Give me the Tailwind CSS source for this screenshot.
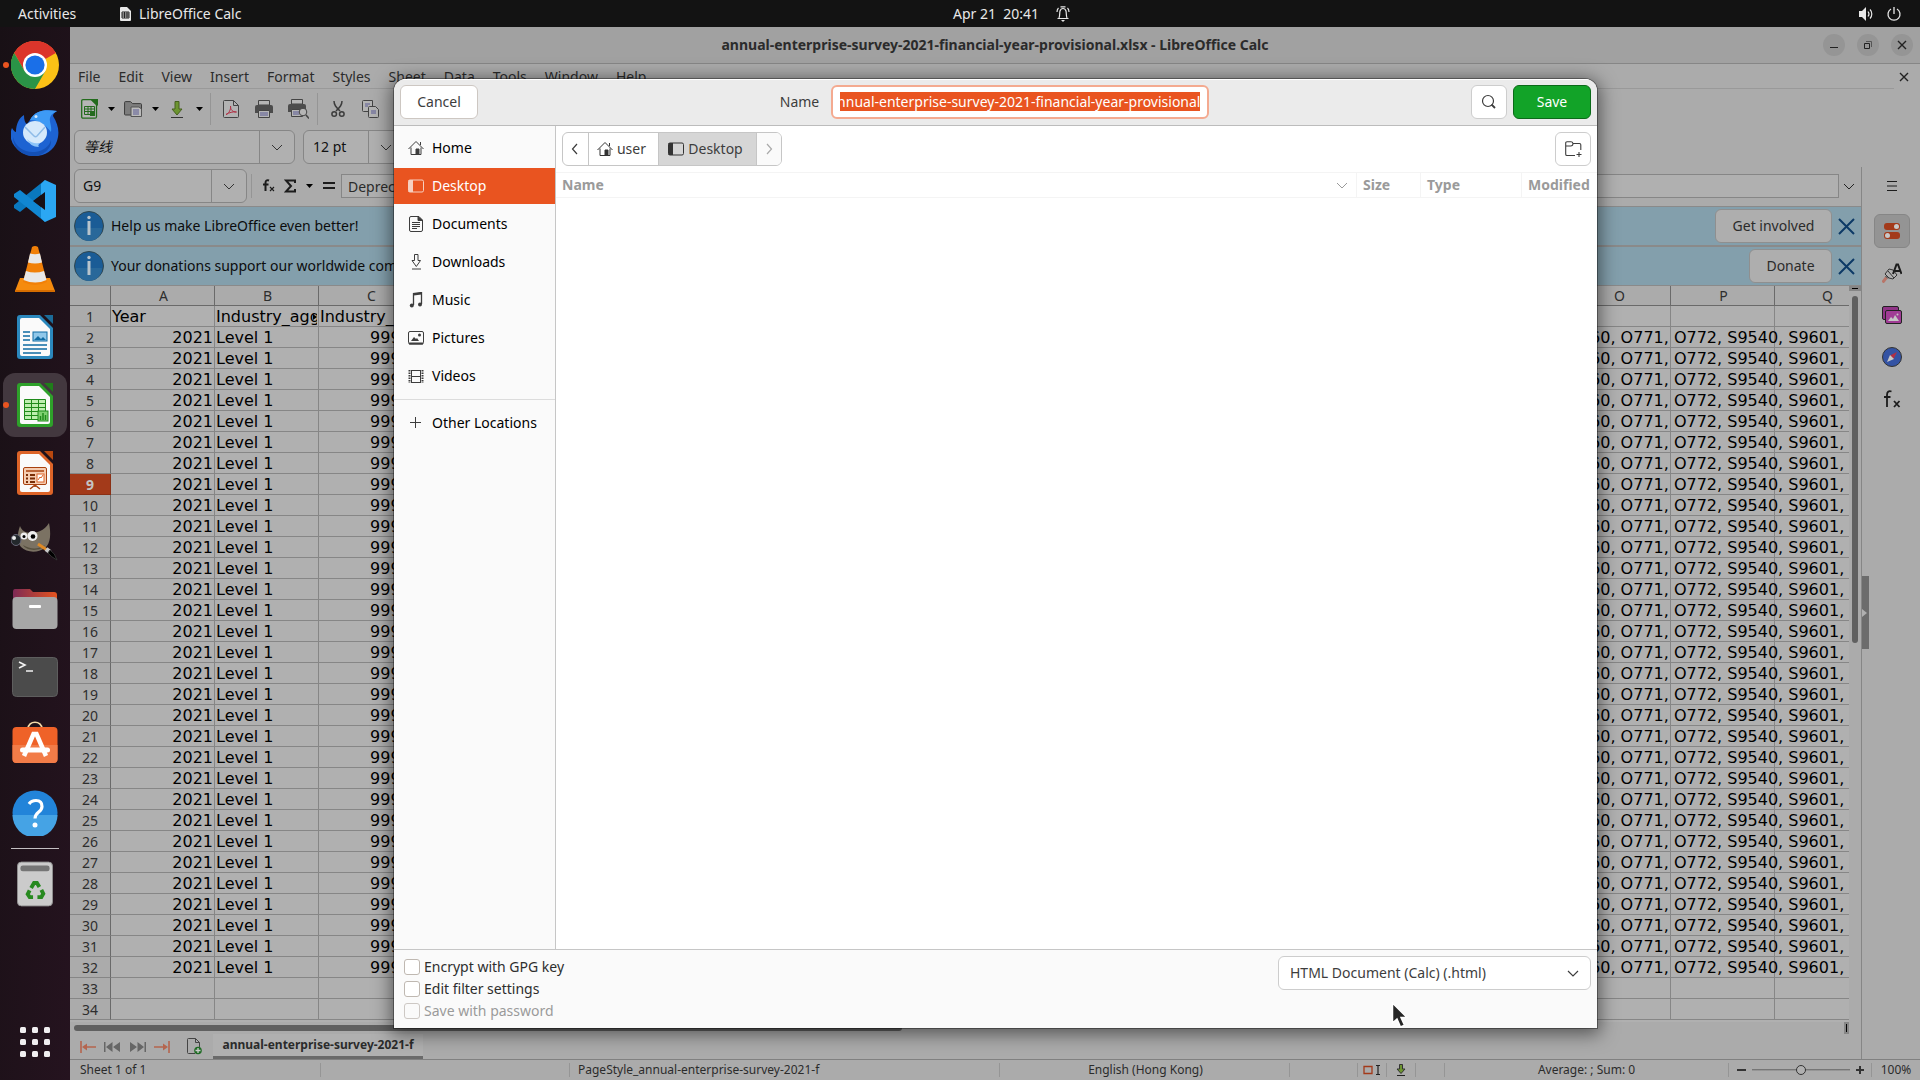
<!DOCTYPE html>
<html lang="en">
<head>
<meta charset="utf-8">
<title>LibreOffice Calc</title>
<script src="https://cdn.jsdelivr.net/npm/@tailwindcss/browser@4"></script>
</head>
<body class="relative flex h-screen flex-col overflow-hidden bg-[#131313] font-['Noto_Sans','Noto_Sans_CJK_SC',sans-serif] text-sm text-[#2b2b2b]">

<!-- GNOME top bar -->
<header class="grid h-[27px] shrink-0 grid-cols-3 items-center bg-[#131313] text-[#e8e8e8]">
  <div class="flex items-center pl-[18px]">
    <button class="w-[102px] text-left">Activities</button>
    <svg class="mr-2 h-3.5 w-[11px]" viewBox="0 0 11 14"><path d="M1 0h6l4 4v9a1 1 0 0 1-1 1H1a1 1 0 0 1-1-1V1a1 1 0 0 1 1-1z" fill="#e8e8e8"/><path d="M2 5h7v6H2zM2 7h7M2 9h7M4.500 5v6M7 5v6" fill="none" stroke="#222"/></svg>
    <button>LibreOffice Calc</button>
  </div>
  <div class="flex items-center justify-center gap-4 pl-[104px]">
    <button class="whitespace-pre">Apr 21  20:41</button>
    <svg class="h-4 w-4" viewBox="0 0 16 16" fill="none" stroke="#e8e8e8" stroke-width="1.200"><path d="M2.500 12.500h11M4 12c1-2 .5-5 1-7 .5-1.700 1.500-2.500 3-2.500s2.500.8 3 2.500c.5 2 0 5 1 7M3.500 2C2.500 3 2 4.500 2 6M12.500 2C13.500 3 14 4.500 14 6M5.500.8h5"/><path d="M6 14h4l-2 2z" fill="#e8e8e8" stroke="none"/></svg>
  </div>
  <div class="flex items-center justify-end gap-3 pr-[18px]">
    <svg class="h-4 w-4" viewBox="0 0 16 16" fill="none" stroke="#e8e8e8"><path d="M1 5h3l4-4v14l-4-4H1z" fill="#e8e8e8" stroke="none"/><path d="M10 5.500c1.200 1.500 1.200 3.500 0 5M12 3.500c2.400 2.500 2.400 6.500 0 9" stroke-width="1.200"/></svg>
    <svg class="h-4 w-4" viewBox="0 0 16 16" fill="none" stroke="#e8e8e8" stroke-width="1.300"><path d="M8 1v7M5 3a6 6 0 1 0 6 0"/></svg>
  </div>
</header>

<div class="flex min-h-0 flex-1">

  <!-- Dock -->
  <nav aria-label="Dock" class="flex w-[70px] shrink-0 flex-col items-center gap-1 bg-linear-to-br from-[#181015] to-[#25131f] pt-1.5">
    <button aria-label="Chrome" class="relative flex size-16 items-center justify-center"><span class="absolute left-0 size-1.5 rounded-full bg-[#e95420]"></span>
      <svg class="size-12" viewBox="0 0 48 48"><circle cx="24" cy="24" r="24" fill="#fbc116"/><path d="M24 24 3.200 12A24 24 0 0 1 44.800 12z" fill="#dc352b"/><path d="M24 12h20.800A24 24 0 0 0 3.200 12L13.600 30z" fill="#dc352b"/><path d="M3.200 12A24 24 0 0 0 24 48l10.400-18L24 34 13.600 30z" fill="#2a9447"/><circle cx="24" cy="24" r="12" fill="#fff"/><circle cx="24" cy="24" r="9.600" fill="#1a6fe8"/></svg></button>
    <button aria-label="Thunderbird" class="flex size-16 items-center justify-center">
      <svg class="size-12" viewBox="0 0 48 48"><path d="M19 11C24 1 34 0 46 2c-3 2-4 3-4 5 5 8 7 16 4 25-3 9-12 15-22 15S3 41 0 30c-1-5 0-9 1-11 2 3 3 4 4 4 0-8 3-14 8-17 0 5 1 8 3 9z" fill="#1d63d2"/><path d="M19 11C24 1 34 0 46 2c-3 2-6 3-7 7-1 3 2 8 1 14-6-8-13-12-21-12z" fill="#3d9af5"/><path d="M2 28c2 10 12 16 22 15 8-1 14-5 16-12 1 8-7 16-18 16C11 47 2 39 2 28z" fill="#1450b5"/><ellipse cx="24" cy="23.500" rx="12" ry="11.500" fill="#d5e9fb"/><path d="m14 18 9 9c1 1 2 1 3 0l8-9" fill="none" stroke="#8fbce8" stroke-width="1.500"/><path d="M16 30c4 4 8 5 13 4-2 2-2 3-1 4-6 0-10-3-12-8z" fill="#8cc4f8"/><circle cx="25" cy="7.500" r="1.500" fill="#d5e9fb"/></svg></button>
    <button aria-label="Visual Studio Code" class="flex size-16 items-center justify-center">
      <svg class="size-[42px]" viewBox="0 0 42 42"><path d="M31 0v12L6 32 0 28v-3z" fill="#0a78be"/><path d="M31 42V30L6 10l-6 4v3z" fill="#1187d2"/><path d="M31 0 27 4v34l4 4 11-5V5z" fill="#2ba7f3"/><path d="M31 12v18L19 21z" fill="#181015"/></svg></button>
    <button aria-label="VLC" class="flex size-16 items-center justify-center">
      <svg class="h-12 w-[42px]" viewBox="0 0 42 48"><path d="M6 33h30l5 13H1z" fill="#f58b0e"/><path d="M1 45h40v2H1z" fill="#d66d00"/><path d="M18 2q3-2 6 0l9 35q-12 6-24 0z" fill="#f18008"/><path d="m16 8.500-2 9q7 2 14 0l-2-9q-5 1.500-10 0zM12 26q9 3 18 0l2.500 9q-11 5-23 0z" fill="#e8e8e8"/></svg></button>
    <button aria-label="Writer" class="flex size-16 items-center justify-center">
      <svg class="h-11 w-9" viewBox="0 0 36 44"><path d="M3 0h20l13 13v28a3 3 0 0 1-3 3H3a3 3 0 0 1-3-3V3a3 3 0 0 1 3-3z" fill="#2b88bd"/><path d="M27 0h9v9z" fill="#1b6b98"/><path d="M5 3h17l11 11v25a2 2 0 0 1-2 2H5a2 2 0 0 1-2-2V5q0-2 2-2z" fill="#fafafa"/><path d="M6 17h7M6 21h7M6 25h7M6 30h24M6 34h24M6 38h18" stroke="#0f6ba3" stroke-width="1.600"/><rect x="16" y="17" width="14" height="9" fill="#90c8ea" stroke="#0f6ba3"/><path d="m17 25 4-4 3 3 2-2 3 3z" fill="#0f6ba3"/></svg></button>
    <button aria-label="Calc" class="relative flex size-16 items-center justify-center rounded-xl bg-[#43383f]"><span class="absolute left-0 size-1.5 rounded-full bg-[#e95420]"></span>
      <svg class="h-11 w-9" viewBox="0 0 36 44"><path d="M3 0h20l13 13v28a3 3 0 0 1-3 3H3a3 3 0 0 1-3-3V3a3 3 0 0 1 3-3z" fill="#2ea12a"/><path d="M27 0h9v9z" fill="#1f7d1a"/><path d="M5 3h17l11 11v25a2 2 0 0 1-2 2H5a2 2 0 0 1-2-2V5q0-2 2-2z" fill="#fafafa"/><path d="M7.500 16.500h21v20h-21zM7.500 20.500h21M7.500 24.500h21M7.500 28.500h21M7.500 32.500h21M14.500 16.500v20M21.500 16.500v20" fill="#bdeeb0" stroke="#1f8a1a"/><rect x="21" y="28" width="10" height="10" fill="#7fd070" stroke="#1f8a1a"/><path d="M23.500 37v-4M26 37v-7M28.500 37v-5" stroke="#1f8a1a" stroke-width="1.500"/></svg></button>
    <button aria-label="Impress" class="flex size-16 items-center justify-center">
      <svg class="h-11 w-9" viewBox="0 0 36 44"><path d="M3 0h20l13 13v28a3 3 0 0 1-3 3H3a3 3 0 0 1-3-3V3a3 3 0 0 1 3-3z" fill="#dd6428"/><path d="M27 0h9v9z" fill="#b8480f"/><path d="M5 3h17l11 11v25a2 2 0 0 1-2 2H5a2 2 0 0 1-2-2V5q0-2 2-2z" fill="#fafafa"/><rect x="6.500" y="16.500" width="23" height="17" rx="1.500" fill="#f5cdb2" stroke="#a8410f"/><path d="M9 20h18M18 34v2M18 34l-5 4M18 34l5 4" stroke="#a8410f" stroke-width="1.500"/><path d="M9 24h2M9 27.500h2M9 31h2M13 24h5M13 27.500h5M13 31h5" stroke="#7a2d06" stroke-width="2"/><rect x="20" y="23" width="7" height="8" fill="#fff" stroke="#dd6428"/><path d="m21 29 2-3 1 1 2-3" fill="none" stroke="#dd6428"/></svg></button>
    <button aria-label="GIMP" class="flex size-16 items-center justify-center">
      <svg class="size-12" viewBox="0 0 48 48"><path d="M9 9c2 5 5 6 9 7 8 0 15-2 20-10 2 10 2 20-4 25-7 5-18 5-24-1-4-5-4-13-1-21z" fill="#7b7263"/><path d="M12 28c8 5 16 4 22 0-3 6-18 7-22 0z" fill="#57503f"/><ellipse cx="5" cy="23" rx="5" ry="5.500" fill="#23282c" stroke="#667"/><circle cx="3" cy="21" r="2" fill="#eee"/><circle cx="13" cy="19" r="3.500" fill="#eee"/><circle cx="21.500" cy="19" r="5" fill="#eee"/><circle cx="13" cy="19.500" r="1.500"/><circle cx="22" cy="19.500" r="2.300"/><path d="m27 27 9 6" stroke="#e08a25" stroke-width="3"/><path d="m35 32 4 3" stroke="#c8c8c8" stroke-width="4.500"/><path d="M39 33q5 3 7 10-6-3-9-7z" stroke="#333"/></svg></button>
    <button aria-label="Files" class="flex size-16 items-center justify-center">
      <svg class="h-10 w-[46px]" viewBox="0 0 46 40"><defs><linearGradient id="fld"><stop stop-color="#7d2a55"/><stop offset="1" stop-color="#e5541f"/></linearGradient></defs><path d="M3 0h15l3 3h21q3 0 3 3v10H1V3q0-3 2-3z" fill="url(#fld)"/><rect x=".5" y="8" width="45" height="32" rx="4" fill="#a7a7a7"/><rect x="17" y="16" width="12" height="3" rx="1" fill="#fff"/></svg></button>
    <button aria-label="Terminal" class="flex size-16 items-center justify-center">
      <svg class="h-10 w-[46px]" viewBox="0 0 46 40"><rect x=".5" y=".5" width="45" height="39" rx="4" fill="#4b4b4b" stroke="#5e5e5e"/><path d="m7 5 6 3-6 3M14 14h7" fill="none" stroke="#f2f2f2" stroke-width="1.600"/></svg></button>
    <button aria-label="Software" class="flex size-16 items-center justify-center">
      <svg class="size-12" viewBox="-1 0 48 48"><path d="M16 8c0-9 14-9 14 0" fill="none" stroke="#f3d9a8" stroke-width="1.700"/><rect x=".5" y="6" width="45" height="36" rx="4" fill="#ef6228"/><path d="M.5 24h45v14q0 4-4 4h-37q-4 0-4-4z" fill="#f27c48"/><path d="M12 35 21.500 13h3L34 35" fill="none" stroke="#fff" stroke-width="4.500"/><path d="M10.500 29h25" stroke="#fff" stroke-width="5" stroke-linecap="round"/></svg></button>
    <button aria-label="Help" class="flex size-16 items-center justify-center">
      <svg class="size-[46px]" viewBox="0 0 46 46"><circle cx="23" cy="23" r="22.500" fill="#2284d9"/><path d="M.5 25a22.500 22.500 0 0 0 45 0z" fill="#45a3e5"/><path d="M17 14c2-3 5-3.500 7-3.500 4 0 6 2.500 6 6 0 6-7 5-7 12" fill="none" stroke="#fff" stroke-width="3.200"/><circle cx="23" cy="35" r="2.500" fill="#fff"/></svg></button>
    <div class="-mt-px h-px w-12 bg-[#c4bfc2]"></div>
    <button aria-label="Trash" class="-mt-px flex size-16 shrink-0 items-center justify-center">
      <svg class="h-[46px] w-9" viewBox="0 0 37 46"><rect x=".5" y=".5" width="36" height="45" rx="4" fill="#cbcbcb" stroke="#909090"/><rect x="3.500" y="4" width="30" height="6" rx="2.500" fill="#757575"/><g fill="none" stroke="#27891f" stroke-width="4"><path d="m14.500 27 3-5h3l2.500 4M25 29l2 4-2 3.500h-4M16.500 36.500H13l-2-3 2-4"/></g></svg></button>
    <button aria-label="Show applications" class="mt-auto mb-1.5 flex size-16 shrink-0 items-center justify-center">
      <svg class="size-[30px]" viewBox="0 0 30 30" fill="#f0eef0"><rect width="6" height="6" rx="1.500"/><rect x="12" width="6" height="6" rx="1.500"/><rect x="24" width="6" height="6" rx="1.500"/><rect y="12" width="6" height="6" rx="1.500"/><rect x="12" y="12" width="6" height="6" rx="1.500"/><rect x="24" y="12" width="6" height="6" rx="1.500"/><rect y="24" width="6" height="6" rx="1.500"/><rect x="12" y="24" width="6" height="6" rx="1.500"/><rect x="24" y="24" width="6" height="6" rx="1.500"/></svg></button>
  </nav>

  <!-- Calc window, dimmed behind the dialog -->
  <main class="flex min-w-0 flex-1 flex-col bg-[#ababab]">
    <div class="relative flex h-[37px] shrink-0 items-center justify-center border-b border-[#868686] bg-[#a1a1a1]">
      <h1 class="font-bold">annual-enterprise-survey-2021-financial-year-provisional.xlsx - LibreOffice Calc</h1>
      <div class="absolute right-[7px] flex gap-3">
        <button aria-label="Minimize" class="size-[22px] rounded-full bg-[#959595]"><svg viewBox="0 0 22 22" stroke="#222"><path d="M7 13.500h8"/></svg></button>
        <button aria-label="Restore" class="size-[22px] rounded-full bg-[#959595]"><svg viewBox="0 0 22 22" fill="none" stroke="#222"><path d="M7.500 9.500h5v5h-5z"/><path d="M9 7.500h5.500V13" stroke="#555"/></svg></button>
        <button aria-label="Close" class="size-[22px] rounded-full bg-[#959595]"><svg viewBox="0 0 22 22" stroke="#222" stroke-width="1.400"><path d="m7 7 8 8M15 7l-8 8"/></svg></button>
      </div>
    </div>
    <div class="flex h-[25px] shrink-0 items-stretch">
      <div class="flex flex-1 items-center gap-[18px] border-b border-[#999] pt-px pl-2">
        <button>File</button><button>Edit</button><button>View</button><button>Insert</button><button>Format</button><button>Styles</button><button>Sheet</button><button>Data</button><button>Tools</button><button>Window</button><button>Help</button>
      </div>
      <button aria-label="Close document" class="mr-2 ml-0.5 w-4"><svg class="size-4" viewBox="0 0 16 16" stroke="#222" stroke-width="1.400"><path d="m4 4 8 8M12 4l-8 8"/></svg></button>
    </div>

    <!-- Standard toolbar -->
    <div class="flex h-10 shrink-0 items-center pl-[11px]">
      <button aria-label="New" class="flex"><svg class="h-5 w-[17px]" viewBox="0 0 17 20"><path d="M1.500.7h9l5 5v12q0 1.500-1.500 1.500H2.200Q.7 19.200.7 17.700V2Q.7.7 2 .7z" fill="#b5b5b5" stroke="#236b1d" stroke-width="1.300"/><path d="M9 0h8v7z" fill="#236b1d"/><path d="M3.500 7.500h10v8h-10zM3.500 10h10M3.500 12.500h10M7 7.500v8M10 7.500v8" fill="none" stroke="#236b1d"/><path d="M9 12h5v5H9z" fill="#236b1d"/></svg></button>
      <svg class="ml-2.5 h-1 w-[7px]" viewBox="0 0 7 4"><path d="M0 0h7L3.500 4z"/></svg>
      <button aria-label="Open" class="ml-[9px] flex"><svg class="h-4 w-[18px]" viewBox="0 0 18 16"><path d="M.6 1.500Q.6.600 1.500.6h5l2 2h8q1 0 1 1V14H1.500q-1 0-1-1z" fill="#7d7d7d" stroke="#3d3d3d"/><path d="M7 6h8l2.500 2v7.500H7z" fill="#bbb" stroke="#555"/><path d="M9 9h6M9 11h6M9 13h6" stroke="#5b5b94"/></svg></button>
      <svg class="ml-2.5 h-1 w-[7px]" viewBox="0 0 7 4"><path d="M0 0h7L3.500 4z"/></svg>
      <button aria-label="Save" class="ml-3 flex"><svg class="h-[17px] w-3" viewBox="0 0 12 17"><path d="M4 .5h4V8h3l-5 6-5-6h3z" fill="#6c9430" stroke="#46611f"/><path d="M0 16.500h12" stroke="#333"/></svg></button>
      <svg class="ml-[13px] h-1 w-[7px]" viewBox="0 0 7 4"><path d="M0 0h7L3.500 4z"/></svg>
      <span class="ml-[7px] h-8 w-px bg-[#959595]"></span>
      <button aria-label="Export as PDF" class="ml-3 flex"><svg class="h-[18px] w-4" viewBox="0 0 16 18"><path d="M1.500.5h9l5 5v11q0 1-1 1h-13q-1 0-1-1v-15q0-1 1-1z" fill="#b3b3b3" stroke="#444"/><path d="M10.500.5v5h5" fill="none" stroke="#444"/><path d="M3 14.500c3-1 5-5 4.500-8.500 0 4 2 6 6 6-4-.5-7 .5-10.500 2.500z" fill="none" stroke="#b03045"/></svg></button>
      <button aria-label="Print" class="ml-4 flex"><svg class="h-[18px] w-[18px]" viewBox="0 0 18 18"><path d="M3.500.5h11V5h-11z" fill="#b5b5b5" stroke="#444"/><path d="M2 5h14q2 0 2 2v6H0V7q0-2 2-2z" fill="#4c4c4c"/><path d="M3.500 10.500h11v7h-11z" fill="#b5b5b5" stroke="#444"/><path d="M5 13h8M5 15h8" stroke="#5b5b94"/></svg></button>
      <button aria-label="Print preview" class="ml-[15px] flex"><svg class="h-5 w-[21px]" viewBox="0 0 21 20"><path d="M3.500.5h11V5h-11z" fill="#b5b5b5" stroke="#444"/><path d="M2 5h14q2 0 2 2v6H0V7q0-2 2-2z" fill="#4c4c4c"/><path d="M3.500 10.500h11v7h-11z" fill="#b5b5b5" stroke="#444"/><path d="M5 13h6M5 15h6" stroke="#5b5b94"/><circle cx="15" cy="13" r="3.800" fill="#b5b5b5" stroke="#444"/><path d="m18 16 3 3.500" stroke="#444" stroke-width="1.500"/></svg></button>
      <span class="ml-2 h-8 w-px bg-[#959595]"></span>
      <button aria-label="Cut" class="ml-[13px] flex"><svg class="h-[18px] w-3.5" viewBox="0 0 14 18" fill="none" stroke="#3c3c3c" stroke-width="1.500"><path d="M3 1c0 4 2 6 6 10M11 1c0 4-2 6-6 10"/><circle cx="3.200" cy="14" r="2.300"/><circle cx="10.800" cy="14" r="2.300"/></svg></button>
      <button aria-label="Copy" class="ml-[17px] flex"><svg class="h-[18px] w-[17px]" viewBox="0 0 17 18" fill="#b3b3b3" stroke="#444"><path d="M1.500.5h9v11h-9q-1 0-1-1v-9q0-1 1-1z"/><path d="M7.500 6.500h6l3 3v7q0 1-1 1h-8q-1 0-1-1v-9q0-1 1-1z"/><path d="M3 4h5M3 6h3M9 11h5M9 13h5" stroke="#5b5b94"/></svg></button>
    </div>

    <!-- Formatting toolbar -->
    <div class="flex h-[38px] shrink-0 items-start gap-2 pt-px pl-1 text-[#111]">
      <div class="flex h-[34px] w-[221px] overflow-hidden rounded-md border border-[#868686] bg-[#b0b0b0]">
        <input aria-label="Font name" value="等线" class="min-w-0 flex-1 pl-[9px] italic outline-none">
        <button aria-label="Choose font" class="flex w-[35px] items-center justify-center border-l border-[#868686]"><svg class="size-3" viewBox="0 0 12 12" fill="none" stroke="#333"><path d="m1 4 5 5 5-5"/></svg></button>
      </div>
      <div class="flex h-[34px] w-[101px] overflow-hidden rounded-md border border-[#868686] bg-[#b0b0b0]">
        <input aria-label="Font size" value="12 pt" class="min-w-0 flex-1 pl-[9px] outline-none">
        <button aria-label="Choose size" class="flex w-[35px] items-center justify-center border-l border-[#868686]"><svg class="size-3" viewBox="0 0 12 12" fill="none" stroke="#333"><path d="m1 4 5 5 5-5"/></svg></button>
      </div>
    </div>

    <div class="flex min-h-0 flex-1">
      <div class="flex min-w-0 flex-1 flex-col">

        <!-- Formula bar -->
        <div class="flex h-[39px] shrink-0 items-center pb-px pl-1 text-[#111]">
          <div class="flex h-[34px] w-[173px] overflow-hidden rounded-md border border-[#868686] bg-[#b0b0b0]">
            <input aria-label="Name box" value="G9" class="min-w-0 flex-1 pl-2 outline-none">
            <button aria-label="Open name box" class="flex w-[35px] items-center justify-center border-l border-[#868686]"><svg class="size-3" viewBox="0 0 12 12" fill="none" stroke="#333"><path d="m1 4 5 5 5-5"/></svg></button>
          </div>
          <span class="ml-1 h-6 w-px bg-[#959595]"></span>
          <button aria-label="Function wizard" class="ml-2.5 flex"><svg class="h-4 w-[13px]" viewBox="0 0 13 16" fill="none" stroke="#1c1c1c"><path d="M7 2.500C4.500 1.500 3.500 3 3.500 5v8M1 6.500h5.500" stroke-width="2"/><path d="m8 9 4 4M12 9l-4 4" stroke-width="1.100"/></svg></button>
          <button aria-label="Sum" class="ml-[9px] flex"><svg class="h-3.5 w-3" viewBox="0 0 12 14"><path d="M11 4V1.500H2L7 7l-5 5.500h9V10" fill="none" stroke="#1c1c1c" stroke-width="2"/></svg></button>
          <svg class="ml-2.5 h-1 w-[7px]" viewBox="0 0 7 4"><path d="M0 0h7L3.500 4z"/></svg>
          <button aria-label="Formula" class="ml-2.5 flex"><svg class="h-2.5 w-3" viewBox="0 0 12 10" stroke="#1c1c1c" stroke-width="2"><path d="M0 2h12M0 7h12"/></svg></button>
          <input aria-label="Formula input" value="Depreciation" class="ml-1.5 h-6 min-w-0 flex-1 border border-[#868686] bg-[#b0b0b0] pl-1.5 text-[#2b2b2b] outline-none">
          <button aria-label="Expand formula bar" class="flex w-[22px] items-center pl-1"><svg class="size-3" viewBox="0 0 12 12" fill="none" stroke="#222"><path d="m1 4 5 5 5-5"/></svg></button>
        </div>

        <!-- Info bars -->
        <div class="flex h-10 shrink-0 items-center border-y border-[#8a8a8a] bg-[#839fac] pr-1.5 pl-1 text-[#0c0c0c]">
          <svg class="mr-[7px] size-[30px]" viewBox="0 0 30 30"><circle cx="15" cy="15" r="14.500" fill="#1a5c96" stroke="#31474f"/><path d="M2 17a13 13 0 0 0 26 0z" fill="#28689a"/><path d="M15 10v14" stroke="#b8c4cc" stroke-width="3"/><circle cx="15" cy="6.500" r="1.700" fill="#b8c4cc"/></svg>
          <span class="flex-1">Help us make LibreOffice even better!</span>
          <button class="h-[34px] w-[117px] rounded-md border border-[#8f8f8f] bg-[#aeaeae] text-[#2b2b2b]">Get involved</button>
          <button aria-label="Dismiss" class="ml-1.5 flex"><svg class="size-[17px]" viewBox="0 0 17 17" stroke="#0d3a66" stroke-width="2"><path d="m1 1 15 15M16 1 1 16"/></svg></button>
        </div>
        <div class="flex h-10 shrink-0 items-center border-y border-[#8a8a8a] bg-[#839fac] pr-1.5 pl-1 text-[#0c0c0c]">
          <svg class="mr-[7px] size-[30px]" viewBox="0 0 30 30"><circle cx="15" cy="15" r="14.500" fill="#1a5c96" stroke="#31474f"/><path d="M2 17a13 13 0 0 0 26 0z" fill="#28689a"/><path d="M15 10v14" stroke="#b8c4cc" stroke-width="3"/><circle cx="15" cy="6.500" r="1.700" fill="#b8c4cc"/></svg>
          <span class="flex-1">Your donations support our worldwide community.</span>
          <button class="h-[34px] w-[83px] rounded-md border border-[#8f8f8f] bg-[#aeaeae] text-[#2b2b2b]">Donate</button>
          <button aria-label="Dismiss" class="ml-1.5 flex"><svg class="size-[17px]" viewBox="0 0 17 17" stroke="#0d3a66" stroke-width="2"><path d="m1 1 15 15M16 1 1 16"/></svg></button>
        </div>

        <!-- Sheet and scroll bars -->
        <div class="flex min-h-0 flex-1">
          <div class="min-w-0 flex-1 overflow-hidden bg-[#b0b0b0]">
            <table class="w-[1809px] table-fixed border-separate border-spacing-0 font-['DejaVu_Sans',sans-serif] text-base leading-[18px] text-black">
              <thead id="letters" class="font-['Noto_Sans',sans-serif] text-sm leading-[19px] text-[#2e2e2e]"></thead>
              <tbody id="cells"></tbody>
            </table>
          </div>
          <div class="flex w-3 shrink-0 flex-col items-center">
            <div class="flex h-[5px] w-full items-center justify-center bg-[#868686]"><span class="h-px w-1.5 bg-black"></span></div>
            <div class="mt-[5px] h-[347px] w-1.5 rounded-full bg-[#606060]"></div>
          </div>
        </div>
        <div class="flex h-3 shrink-0 items-center justify-between pr-3 pl-1">
          <div class="h-1.5 w-[828px] rounded-full bg-[#606060]"></div>
          <div class="flex h-full w-[5px] items-center justify-center bg-[#868686]"><span class="h-2 w-px bg-black"></span></div>
        </div>

        <!-- Sheet tabs -->
        <div class="flex h-[25px] shrink-0 items-center pl-2.5">
          <button aria-label="First sheet" class="flex"><svg class="h-3 w-4" viewBox="0 0 16 12"><path d="M1 0v12M4 6h12" stroke="#b5654e" stroke-width="1.600"/><path d="M2 6l5-3.500v7z" fill="#b5654e"/></svg></button>
          <button aria-label="Previous sheet" class="ml-2 flex"><svg class="h-2.5 w-4" viewBox="0 0 16 10" fill="#666"><path d="M0 0h1.500v10H0zM8.500 0v10L2 5zM16 0v10L9 5z"/></svg></button>
          <button aria-label="Next sheet" class="ml-2.5 flex"><svg class="h-2.5 w-4" viewBox="0 0 16 10" fill="#666"><path d="M14.500 0H16v10h-1.500zM7.500 0v10L14 5zM0 0v10l7-5z"/></svg></button>
          <button aria-label="Last sheet" class="ml-2 flex"><svg class="h-3 w-4" viewBox="0 0 16 12"><path d="M15 0v12M0 6h12" stroke="#b5654e" stroke-width="1.600"/><path d="M14 6 9 2.500v7z" fill="#b5654e"/></svg></button>
          <button aria-label="Add sheet" class="ml-4 flex"><svg class="h-[17px] w-4" viewBox="0 0 16 17"><path d="M9 15.500H2.500q-1 0-1-1v-13q0-1 1-1h7l4 4V9M9.500.5v4h4" fill="none" stroke="#444"/><circle cx="12" cy="12.500" r="3.800" fill="#1f6b24"/><path d="M9.500 12.500h5M12 10v5" stroke="#ccc" stroke-width="1.300"/></svg></button>
          <button class="ml-[11px] h-full w-[210px] border-b-3 border-[#6a6a6a] bg-[#b0b0b0] text-xs font-bold">annual-enterprise-survey-2021-f</button>
        </div>
      </div>

      <!-- Right sidebar -->
      <aside class="relative flex w-[59px] shrink-0 flex-col items-center gap-2 border-l border-[#868686] pt-0.5 pl-px">
        <button aria-label="Collapse sidebar" class="absolute top-[409px] left-0 flex h-[73px] w-[7px] items-center bg-[#6c6c6c]"><svg class="h-2 w-1.5" viewBox="0 0 6 8"><path d="M0 0v8l5-4z" fill="#b0b0b0"/></svg></button>
        <button aria-label="Sidebar settings" class="flex h-[34px] w-9 items-center justify-center"><svg class="size-2.5" viewBox="0 0 10 10" stroke="#1c1c1c"><path d="M0 .5h10M0 5h10M0 9.500h10"/></svg></button>
        <button aria-label="Properties" class="mt-[3px] flex h-[34px] w-9 items-center justify-center rounded-md border border-[#868686] bg-[#949494]"><svg class="h-4 w-4" viewBox="0 0 16 16"><rect width="16" height="7" rx="3" fill="#a33a1a"/><rect y="9" width="16" height="7" rx="3" fill="#a33a1a"/><circle cx="12.500" cy="3.500" r="2.500" fill="#c8c8c8"/><circle cx="3.500" cy="12.500" r="2.500" fill="#c8c8c8"/></svg></button>
        <button aria-label="Styles" class="flex h-[34px] w-9 items-center justify-center"><svg class="size-5" viewBox="0 0 20 20"><path d="m.5 19.500 4-5" stroke="#b87568" stroke-width="3"/><path d="m3 11 4-5 4 1 4 5-4 4-4-1z" fill="#b0b0b0" stroke="#333"/><path d="m6 8 6 7M3.500 13 6 15.500" stroke="#333"/><path d="M11 11 14.500 1.500h1.500L19.500 11M13 8h5" fill="none" stroke="#1c1c1c" stroke-width="2"/></svg></button>
        <button aria-label="Gallery" class="flex h-[34px] w-9 items-center justify-center"><svg class="h-[18px] w-5" viewBox="0 0 20 18" fill="#8f3486" stroke="#222"><rect x=".5" y=".5" width="16" height="13" rx="1.500"/><rect x="3.500" y="4.500" width="16" height="13" rx="1.500" fill="#a03c95"/><path d="m6 15 3-4 2 2 2-4 4 6z" fill="#c5c5c5" stroke="none"/><circle cx="15.500" cy="8.500" r="1" fill="#c5c5c5" stroke="none"/></svg></button>
        <button aria-label="Navigator" class="flex h-[34px] w-9 items-center justify-center"><svg class="size-5" viewBox="0 0 20 20"><circle cx="10" cy="10" r="9.500" fill="#3453a4" stroke="#333"/><path d="m15 5-3.500 7L8 8.500z" fill="#b03045"/><path d="m5 15 3-7 4 4z" fill="#c8c8c8"/></svg></button>
        <button aria-label="Functions" class="flex h-[34px] w-9 items-center justify-center"><svg class="h-[18px] w-[18px]" viewBox="0 0 18 18" fill="none" stroke="#1c1c1c"><path d="M8.500 1.500C5.500.5 4 2 4 5v12M1 7h6.500" stroke-width="1.800"/><path d="m11 11 5.500 6M16.500 11 11 17" stroke-width="1.800"/></svg></button>
      </aside>
    </div>

    <!-- Status bar -->
    <footer class="flex h-[21px] shrink-0 items-center border-t border-[#808080] text-xs *:h-3.5 *:border-[#959595] *:leading-[14px]">
      <div class="w-[251px] border-r pl-2.5">Sheet 1 of 1</div>
      <div class="w-[249px] border-r"></div>
      <div class="w-[430px] border-r pl-2">PageStyle_annual-enterprise-survey-2021-f</div>
      <div class="w-[290px] border-r pl-0.5 text-center">English (Hong Kong)</div>
      <div class="w-[68px] border-r"></div>
      <div class="flex w-[29px] items-center justify-center border-r"><svg class="h-3 w-[18px]" viewBox="0 0 18 12" fill="none"><path d="M1 2.500h8v7H1z" stroke="#a33a1a" stroke-width="1.300"/><path d="M13 1.500h4M15 1.500v9M13 10.500h4" stroke="#222" stroke-width="1.200"/></svg></div>
      <div class="flex w-[29px] items-center justify-center border-r"><svg class="h-3 w-2.5" viewBox="0 0 10 12"><path d="M3.500.5h3V5H9L5 9.500 1 5h2.500z" fill="#6c9430" stroke="#333"/><path d="M1 11.500h8" stroke="#222"/></svg></div>
      <div class="w-[29px] border-r"></div>
      <div class="flex-1 border-r text-center">Average: ; Sum: 0</div>
      <div class="flex w-[143px] items-center justify-center gap-1.5 border-r"><svg class="h-2 w-[9px]" viewBox="0 0 9 8"><path d="M0 4h9" stroke="#333" stroke-width="2"/></svg>
        <input type="range" aria-label="Zoom" value="50" class="h-3 w-[98px] appearance-none bg-linear-to-b from-transparent from-40% via-[#606060] via-40% to-transparent to-60% [&::-webkit-slider-thumb]:size-2.5 [&::-webkit-slider-thumb]:appearance-none [&::-webkit-slider-thumb]:rounded-full [&::-webkit-slider-thumb]:border [&::-webkit-slider-thumb]:border-[#333] [&::-webkit-slider-thumb]:bg-[#b0b0b0]">
        <svg class="size-2" viewBox="0 0 8 8"><path d="M0 4h8M4 0v8" stroke="#333" stroke-width="2"/></svg></div>
      <div class="w-12 text-center">100%</div>
    </footer>
  </main>
</div>

<!-- Save As dialog -->
<form role="dialog" aria-label="Save As" class="absolute top-[79px] right-[323px] bottom-[52px] left-[394px] flex flex-col overflow-hidden rounded-t-xl bg-white text-[#3d3d3d] shadow-[0_3px_18px_3px_rgba(0,0,0,0.5),0_0_0_1px_rgba(0,0,0,0.35)]">
  <div class="flex h-[47px] shrink-0 items-center border-t border-b border-t-white border-b-[#bcbcbc] bg-[#ebebeb] pr-1.5 pb-0.5 pl-1.5">
    <button type="button" class="h-[34px] w-[78px] rounded-md border border-[#cdc7c2] bg-white">Cancel</button>
    <div class="flex flex-1 items-center justify-center gap-3 pr-12 pl-[88px]">
      <label for="filename">Name</label>
      <input id="filename" value="annual-enterprise-survey-2021-financial-year-provisional" class="h-[34px] w-[378px] rounded-md border-2 border-[#f4aa90] bg-white px-[7px] outline-none selection:bg-[#e95420] selection:text-white">
    </div>
    <button type="button" aria-label="Search" class="mr-1.5 flex h-[34px] w-9 items-center justify-center rounded-md border border-[#cdcdcd] bg-white"><svg class="size-4" viewBox="0 0 16 16" fill="none" stroke="#3d3d3d" stroke-width="1.200"><circle cx="7" cy="7" r="5.500"/><path d="m10.500 10.500 3.500 3.500" stroke-width="1.800"/></svg></button>
    <button class="h-[34px] w-[78px] rounded-md border border-[#0b6a19] bg-[#12a328] text-white">Save</button>
  </div>

  <div class="flex min-h-0 flex-1">
    <nav aria-label="Places" class="flex w-[162px] shrink-0 flex-col gap-0.5 border-r border-[#c6c6c6] bg-[#fafafa] pt-1 text-black *:flex *:h-9 *:items-center *:gap-2 *:pl-3.5">
      <a href="#home"><svg class="size-4" viewBox="0 0 16 16" fill="none" stroke="#3d3d3d"><path d="m.5 9 7.500-7.500L15.500 9M12.500 2v3M3 7.500v7h10v-7"/><path d="M8 9h3v5.500H8z" fill="#3d3d3d"/></svg>Home</a>
      <a href="#desktop" class="bg-[#e95420] text-white"><svg class="size-4" viewBox="0 0 16 16"><rect x=".5" y="2" width="15" height="12" rx="1.500" fill="none" stroke="#f6cfc0"/><path d="M.5 2H5v12H.5z" fill="#f6cfc0"/></svg>Desktop</a>
      <a href="#documents"><svg class="size-4" viewBox="0 0 16 16" fill="none" stroke="#3d3d3d"><path d="M3 .5h8l3.500 3.500v10q0 1.500-1.500 1.500H3q-1.500 0-1.500-1.500V2Q1.500.5 3 .5zM4 6.500h8M4 8.500h8M4 10.500h8M4 12.500h5"/><path d="M10 .5v4h4.500z" fill="#3d3d3d"/></svg>Documents</a>
      <a href="#downloads"><svg class="size-4" viewBox="0 0 16 16" fill="none" stroke="#3d3d3d"><path d="M6.500.5h3.500v6h2.500l-4.200 6L4 6.500h2.500zM4 15h9"/></svg>Downloads</a>
      <a href="#music"><svg class="size-4" viewBox="0 0 16 16" fill="none" stroke="#3d3d3d"><path d="M5.500 13V1.500l8-1V12" stroke-width="1.300"/><path d="M5.500 2.500l8-1" stroke-width="2.200"/><circle cx="3.800" cy="13.500" r="2" fill="#3d3d3d" stroke="none"/><circle cx="12" cy="12.500" r="2" fill="#3d3d3d" stroke="none"/></svg>Music</a>
      <a href="#pictures"><svg class="size-4" viewBox="0 0 16 16"><rect x=".5" y="1.500" width="15" height="12.500" rx="1.500" fill="none" stroke="#3d3d3d"/><path d="M1 12.500h14v2H1zM3 11l3-4 2 2 1-1 2 3z" fill="#3d3d3d"/><circle cx="11.500" cy="5" r="1.500" fill="#3d3d3d"/></svg>Pictures</a>
      <a href="#videos"><svg class="size-4" viewBox="0 0 16 16" fill="none" stroke="#3d3d3d"><path d="M3.500 2v13M12.500 2v13M3.500 2.500h9M3.500 8.500h9M3.500 14.500h9"/><path d="M1.500 2v13M14.500 2v13" stroke-width="2" stroke-dasharray="1.500 1"/></svg>Videos</a>
      <div class="my-[3px] h-px! bg-[#dcdcdc]"></div>
      <a href="#other"><svg class="size-4" viewBox="0 0 16 16" stroke="#3d3d3d"><path d="M2 7.500h11M7.500 2v11"/></svg>Other Locations</a>
    </nav>

    <section class="flex min-w-0 flex-1 flex-col">
      <div class="flex h-[46px] shrink-0 items-center justify-between px-1.5">
        <div class="flex h-[34px] overflow-hidden rounded-md border border-[#c6c6c6] bg-white *:flex *:items-center *:justify-center">
          <button type="button" aria-label="Back" class="w-[25px] pr-0.5"><svg class="size-3" viewBox="0 0 12 12" fill="none" stroke="#3d3d3d" stroke-width="1.200"><path d="M8 1 3.500 6 8 11"/></svg></button>
          <button type="button" class="w-[70px] gap-1 border-l border-[#c6c6c6] pr-1"><svg class="size-4" viewBox="0 0 16 16" fill="none" stroke="#333"><path d="m.5 9 7.500-7.500L15.500 9M12.500 2v3M3 7.500v7h10v-7"/><path d="M8 9h3v5.500H8z" fill="#333"/></svg>user</button>
          <button type="button" class="w-[98px] gap-1 border-l border-[#c6c6c6] bg-[#d6d6d6] pr-1"><svg class="size-4" viewBox="0 0 16 16"><rect x=".5" y="2" width="15" height="12" rx="1.500" fill="none" stroke="#333"/><path d="M.5 2H5v12H.5z" fill="#333"/></svg>Desktop</button>
          <button type="button" disabled aria-label="Forward" class="w-[25px] border-l border-[#c6c6c6] bg-[#fafafa]"><svg class="size-3" viewBox="0 0 12 12" fill="none" stroke="#aaa" stroke-width="1.200"><path d="M4 1l4.500 5L4 11"/></svg></button>
        </div>
        <button type="button" aria-label="New folder" class="flex h-[34px] w-9 items-center justify-center rounded-md border border-[#cdcdcd] bg-white"><svg class="h-4 w-[17px]" viewBox="0 0 17 16" fill="none" stroke="#3d3d3d" stroke-width="1.100"><path d="M10 14.500H2q-1.300 0-1.300-1.300V2Q.700.700 2 .7h4q1.500 0 2 1.800h6.500q1.300 0 1.300 1.300V9M.7 5h5Q8 5 8 2.500M14 11v5M11.500 13.500h5"/></svg></button>
      </div>
      <table class="w-full table-fixed border-separate border-spacing-0 text-left text-[#9a9a9a]">
        <colgroup><col><col class="w-16"><col class="w-[101px]"><col class="w-[76px]"></colgroup>
        <thead><tr class="*:h-[26px] *:border-y *:border-[#f4f4f4] *:pl-1.5">
          <th><div class="flex items-center justify-between pr-2">Name<svg class="size-3" viewBox="0 0 12 12" fill="none" stroke="#9a9a9a"><path d="m1 4 5 5 5-5"/></svg></div></th>
          <th class="border-l">Size</th><th class="border-l">Type</th><th class="border-l">Modified</th>
        </tr></thead>
      </table>
    </section>
  </div>

  <div class="flex h-[79px] shrink-0 items-start justify-between border-t border-[#c6c6c6] bg-[#fafafa] pt-1.5 pr-1.5 pl-2.5">
    <div class="flex flex-col text-[#2e2e2e] *:flex *:h-[22px] *:items-center *:gap-1">
      <label><input type="checkbox" class="size-4 appearance-none rounded-[3px] border border-[#bfb8b1] bg-white">Encrypt with GPG key</label>
      <label><input type="checkbox" class="size-4 appearance-none rounded-[3px] border border-[#bfb8b1] bg-white">Edit filter settings</label>
      <label class="text-[#9a9a9a]"><input type="checkbox" disabled class="size-4 appearance-none rounded-[3px] border border-[#cdc8c4] bg-[#fafafa]">Save with password</label>
    </div>
    <div class="relative flex items-center">
      <select aria-label="File type" class="h-[34px] w-[313px] appearance-none rounded-md border border-[#cdcdcd] bg-white pl-[11px] outline-none"><option>HTML Document (Calc) (.html)</option></select>
      <svg class="pointer-events-none absolute right-3 size-3" viewBox="0 0 12 12" fill="none" stroke="#3d3d3d" stroke-width="1.200"><path d="m1 4 5 5 5-5"/></svg>
    </div>
  </div>
</form>

<!-- Mouse pointer -->
<svg class="pointer-events-none absolute top-[1001px] left-[1391px] h-[27px] w-[18px]" viewBox="0 0 18 27"><path d="M1.500 2v20l4.500-4 3.500 8 4-1.700L10 16.500h6z" fill="#262626" stroke="#fff" stroke-width="1.500"/></svg>

<script>
  const letters = 'ABCDEFGHIJKLMNOPQ'.split('');
  const note = 'ANZSIC06 division A-S (excluding classes K6330, L6711, O7552, O760, O771, O772, S9540, S9601, S9602, and S9603)';
  document.getElementById('letters').innerHTML =
    '<tr><th class="w-[41px] border-r border-b border-[#6a6a6a] bg-[#ababab]"></th>' +
    letters.map(l => `<th class="h-5 w-[104px] border-r border-b border-[#6a6a6a] bg-[#ababab] pl-0.5 font-normal">${l}</th>`).join('') + '</tr>';

  const cell = (r, l) => {
    if (r === 1) {
      if (l === 'A') return 'Year';
      if (l === 'B') return '<div class="relative overflow-hidden">Industry_aggregation<svg class="absolute top-1.5 right-0 h-1.5 w-1" viewBox="0 0 4 6"><path d="M0 0v6l4-3z"/></svg></div>';
      if (l === 'C') return '<div class="overflow-hidden">Industry_code</div>';
      return '';
    }
    if (r > 32) return '';
    return { A: '2021', B: 'Level 1', C: '99999', J: note }[l] || '';
  };
  let html = '';
  for (let r = 1; r <= 34; r++) {
    const head = r === 9
      ? 'border-r border-b border-[#8a3015] bg-[#a33a1a] font-bold text-[#c4c4c4]'
      : 'border-r border-b border-r-[#6a6a6a] border-b-[#868686] bg-[#ababab] font-normal text-[#2e2e2e]';
    html += `<tr><th class="h-[21px] pt-0.5 font-['Noto_Sans',sans-serif] text-sm leading-[18px] ${head}">${r}</th>` +
      letters.map(l => {
        const align = r > 1 && (l === 'A' || l === 'C') ? 'text-right' : 'text-left';
        return `<td class="border-r border-b border-[#868686] px-px pt-0.5 whitespace-nowrap ${align}">${cell(r, l)}</td>`;
      }).join('') + '</tr>';
  }
  document.getElementById('cells').innerHTML = html;

  const name = document.getElementById('filename');
  name.focus();
  name.select();
  name.scrollLeft = name.scrollWidth;
</script>
</body>
</html>
